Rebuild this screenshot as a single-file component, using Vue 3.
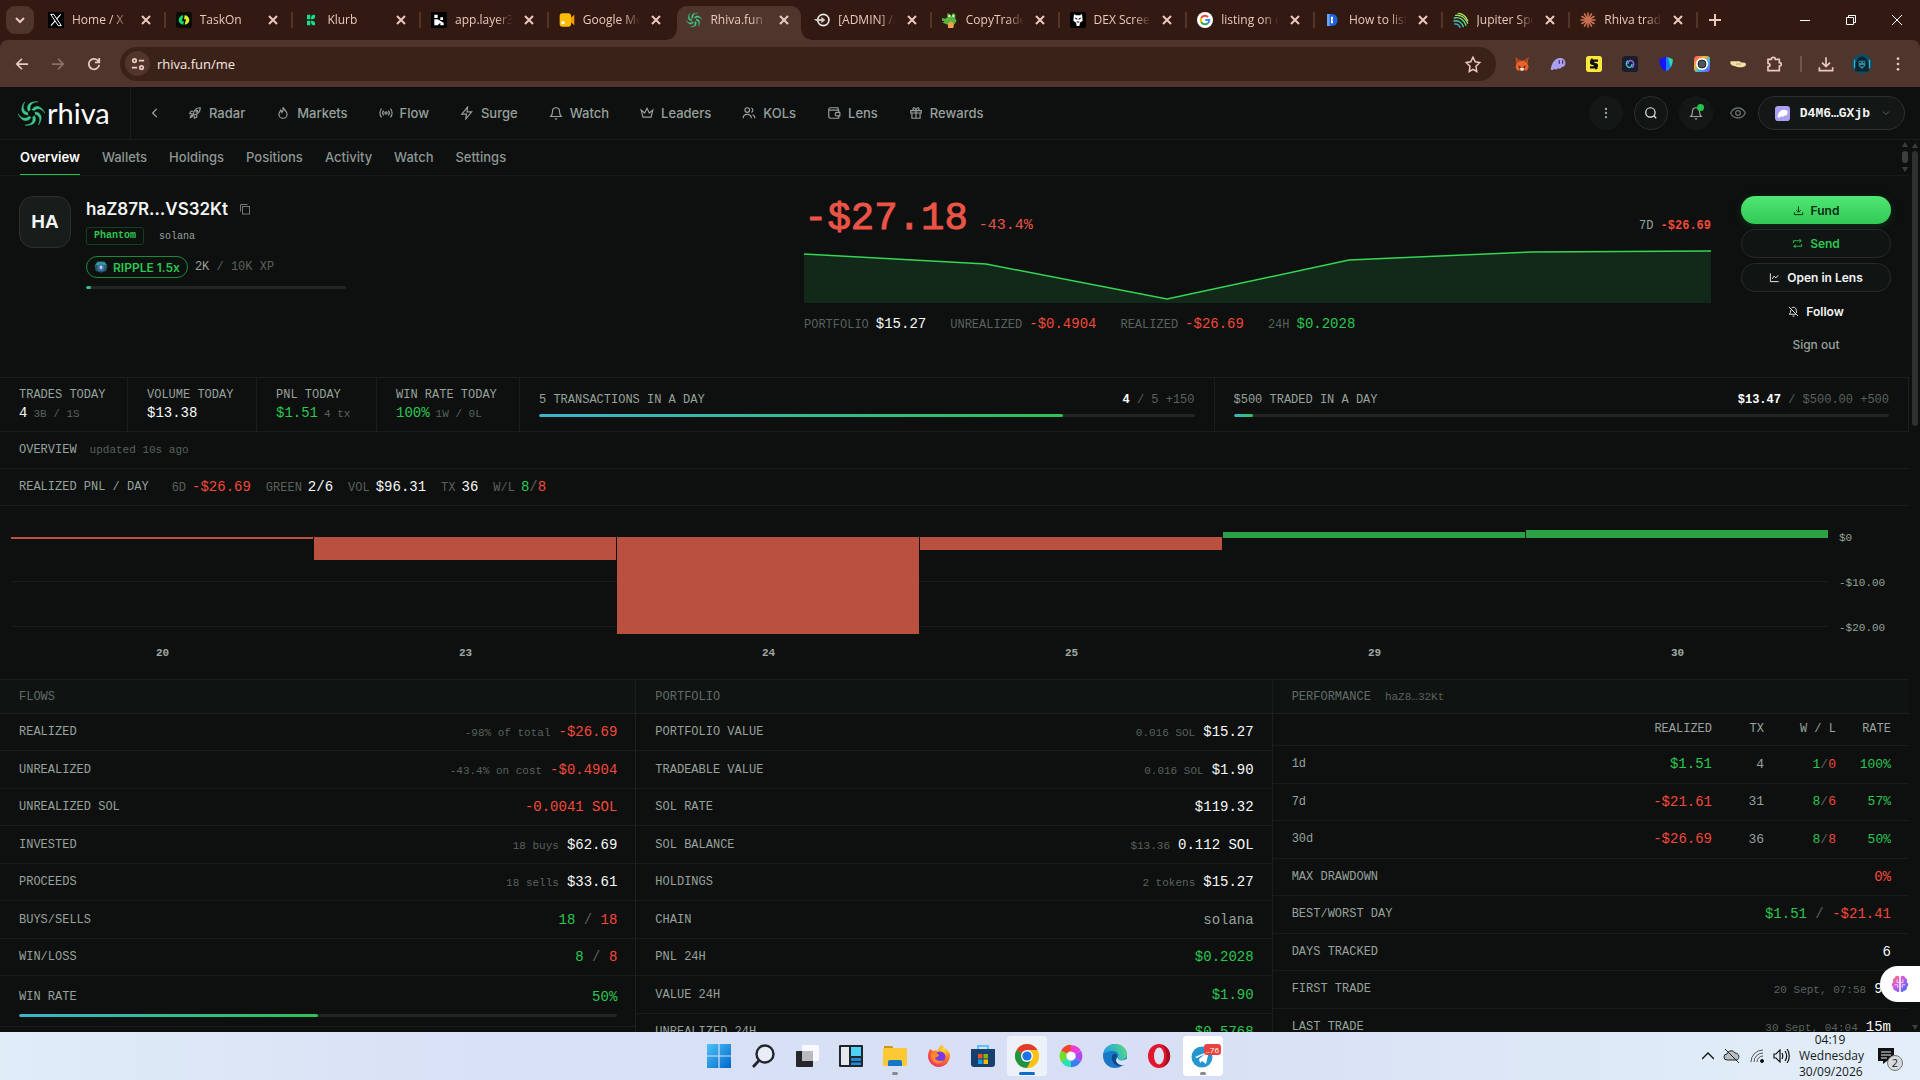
<script setup>
const swirl = (id) => {
  const blades = [0, 60, 120, 180, 240, 300]
    .map((a) => `<path transform="rotate(${a} 12 12)" d="M9.400 10.200C6.600 5.600 9.800 .6 17.800 1.600C12.600 1.800 9.800 4.800 11 8.800"/>`)
    .join('')
  return `<defs><linearGradient id="${id}" gradientUnits="userSpaceOnUse" x1="6" y1="0" x2="14" y2="24"><stop offset="0" stop-color="#2fd158"/><stop offset=".55" stop-color="#3cc98a"/><stop offset="1" stop-color="#46b5d6"/></linearGradient></defs><g fill="#3cc98a" stroke="#3cc98a" stroke-width=".4">${blades}</g>`
}

const burst = Array.from({ length: 12 }, (_, i) => `<path transform="rotate(${i * 30} 12 12)" d="M12 10V1.5" stroke="#d97757" stroke-width="2.2" stroke-linecap="round"/>`).join('')

const art = {
  x: '<rect width="24" height="24" fill="#000"/><path d="M4 3.500h4.600L20 20.500h-4.600Z" fill="none" stroke="#fff" stroke-width="1.500"/><path d="M19 3.500 12.800 10.700M10.700 13.200 4.400 20.500" stroke="#fff" stroke-width="1.600"/>',
  taskon: '<rect width="24" height="24" rx="3" fill="#0a0c06"/><path d="M11 5a7 7 0 0 0 0 14l1-5h-3Z" fill="#12d96c"/><path d="M13 5a7 7 0 0 1 0 14l2-8h-3Z" fill="#d8f222"/>',
  klurb: '<path d="M6 4h5v7H6zM6 13h5v7H6z" fill="#12e08a"/><path d="M12 11c0-5 1-7 6-7v3c0 3-2 4-6 4ZM12 13c0 5 1 7 6 7v-3c0-3-2-4-6-4Z" fill="#12e08a"/>',
  layer: '<rect width="24" height="24" rx="2" fill="#000"/><path d="M5 4h5v5H5zM5 11h5l9 5v4H14v-4l-4 4H5zM14 8h4v4h-4z" fill="#fff"/>',
  meet: '<path d="M17 9l6-5v16l-6-5Z" fill="#f29900"/><rect x="1" y="2" width="17" height="20" rx="4" fill="#fbbc04"/><circle cx="6" cy="16" r="2.500" fill="#fff"/>',
  rhiva: swirl('fav'),
  admin: '<circle cx="14" cy="12" r="8.500" fill="none" stroke="#f0e9e6" stroke-width="2.400"/><path d="M0 10.500h11V7l6 5-6 5v-3.500H3z" fill="#cfc9c6"/>',
  croc: '<path d="M0 9l5 1 3-2V2l4 1 2 3 2-4 4 1v7l2 3-3 5-4 1v4H9v-4l-8-3 3-2-4-1Z" fill="#58b53c"/><path d="M9 17l5-3 4 4-1 6H9Z" fill="#f0a04b"/><circle cx="11" cy="6" r="1.600" fill="#fff"/><circle cx="17" cy="6" r="1.600" fill="#fff"/>',
  dex: '<rect width="24" height="24" rx="3" fill="#000"/><path d="M6 3l3 2h6l3-2 1 10-4 3-1 5h-4l-1-5-4-3Z" fill="#fff"/><path d="M8 9l3 2M16 9l-3 2M10 15h4" stroke="#000" stroke-width="1.600"/>',
  google: '<circle cx="12" cy="12" r="12" fill="#fff"/><g fill="none" stroke-width="3"><path d="M16.600 7.400A6.500 6.500 0 0 0 6.300 8.900" stroke="#ea4335"/><path d="M6.300 8.900a6.500 6.500 0 0 0 0 6.200" stroke="#fbbc05"/><path d="M6.300 15.100a6.500 6.500 0 0 0 10 1.800" stroke="#34a853"/><path d="M16.300 16.900A6.500 6.500 0 0 0 18.500 12H12.500" stroke="#4285f4"/></g>',
  howto: '<path d="M3 3h6v18H3z" fill="#6ba2f5"/><path d="M7 3h4a8 9 0 0 1 0 18H7z" fill="#1f63d8"/><path d="M9 7h3v4l-2 1 2 1v4h-3" fill="#fff"/>',
  jupiter: '<g fill="none" stroke-width="2" stroke-linecap="round"><path d="M8 2C14 2 20 7 22 13" stroke="#b6e84e"/><path d="M4 5C12 4 19 9 22 17" stroke="#8fe06a"/><path d="M2 9C10 7 17 12 19.500 20" stroke="#5fdc8c"/><path d="M1.500 13.500C8 12 13.500 16 15.500 22" stroke="#3ecfb0"/><path d="M2.500 18C6 17.500 9 19.500 10.500 23" stroke="#2cbcd2"/></g>',
  claude: burst,
  fox: '<path d="M2 2l8 5h4l8-5-2 9 2 6-3 5-5-1h-4l-5 1-3-5 2-6Z" fill="#e8622a"/><path d="M6 14l4 2-1 4M18 14l-4 2 1 4" fill="#3a2a22"/><path d="M9 18h6l-1 4h-4Z" fill="#e8e2de"/><path d="M2 2l8 5-5 3ZM22 2l-8 5 5 3Z" fill="#a8401c"/>',
  ghost: '<path d="M1 20C3 9 8 3 15 3c6 0 9 4 8 9-1 4-4 5-5 4-2 3-4 4-6 2-2 3-4 3-5 1-2 2-5 3-6 1Z" fill="#ab9ff2"/><path d="M14 7v4M19 7v4" stroke="#4a3b6e" stroke-width="2" stroke-linecap="round"/>',
  sbox: '<rect width="24" height="24" rx="4" fill="#fbe83a"/><path d="M18 7H10a2.500 2.500 0 0 0 0 5h4a2.500 2.500 0 0 1 0 5H6M8 4l8 16" fill="none" stroke="#111" stroke-width="3.200"/>',
  knot: '<rect width="24" height="24" rx="5" fill="#1c1d2b"/><path d="M15 17c3-1 4-8-1-10-3-1-5 2-5 5" fill="none" stroke="#8b6cf0" stroke-width="2.200"/><path d="M9 7c-3 2-4 8 1 10 3 1 5-2 5-5" fill="none" stroke="#3ac6d8" stroke-width="2.200"/>',
  shield: '<path d="M12 1L2 5c0 9 3 15 10 18Z" fill="#1414ff"/><path d="M12 1l10 4c0 9-3 15-10 18Z" fill="#1c7cff"/><path d="M15 2l7 3c0 5-1 9-3 12Z" fill="#27e0a0"/>',
  lens: '<defs><linearGradient id="rb" x1="0" y1="0" x2="1" y2="1"><stop offset="0" stop-color="#f0417a"/><stop offset=".35" stop-color="#f7b733"/><stop offset=".65" stop-color="#2fb6f5"/><stop offset="1" stop-color="#8b3cf0"/></linearGradient></defs><rect width="24" height="24" rx="5" fill="url(#rb)"/><circle cx="12" cy="12" r="9" fill="#fff"/><circle cx="12" cy="12" r="6" fill="#4d5560" stroke="#222" stroke-width="1.500"/>',
  mitten: '<path d="M1 8h13l4 2c6-1 7 3 5 5-4 3-12 2-16 0-4 0-8-3-6-7Z" fill="#f3e2a6"/><path d="M9 12h7" stroke="#8d7a45"/>',
  avatar: '<circle cx="12" cy="12" r="12" fill="#0d5066"/><path d="M4 21C3 10 7 3 12 3s9 7 8 18Z" fill="#0b2430"/><path d="M8 8h8v6l-4 4-4-4Z" fill="#2b8faa"/><path d="M9 10h2M13 10h2M10 14h4" stroke="#08131a" stroke-width="1.500"/><path d="M3 7v10M21 7v10" stroke="#31b2d0" stroke-width="1.500"/>',
  gem: '<path d="M6 3h12l5 7-2 9-9 3-9-3-2-9Z" fill="#1d5a60"/><path d="M6 3h12l4 6H2Z" fill="#2e9a92"/><circle cx="12" cy="13" r="6" fill="#4a6fb0"/><path d="M10 10h4v5h-4z" fill="#c6d8ec"/>',
  brain: '<defs><linearGradient id="br" x1="0" y1="0" x2="1" y2="1"><stop offset="0" stop-color="#ff7a5c"/><stop offset=".4" stop-color="#d45ae0"/><stop offset="1" stop-color="#2f6bff"/></linearGradient></defs><path d="M11 2C8-.5 5 2 5 4 2 5 2 8 3 9.500 0 11 1 15 3 16c-1 3 2 5 4 5 1 2.500 4 2 4 0ZM13 2c3-2.500 6 0 6 2 3 1 3 4 2 5.500 3 1.500 2 5.500 0 6.500 1 3-2 5-4 5-1 2.500-4 2-4 0Z" fill="url(#br)"/><path d="M8 6v4h3M5 13h4v4M16 6v4h-3M19 13h-4v4" fill="none" stroke="#fff"/>',
}

const line = {
  rocket: '<path d="M9 14c1-6 5-11 12-11 0 7-5 11-11 12ZM9 9H5l-2 4 5 1M15 14.500V19l-4 2-1-6M4 20c0-3 1-4 3-4s1 3-3 4Z"/><circle cx="15" cy="9" r="1.500"/>',
  flame: '<path d="M12 2c1 4 7 7 7 12a7 7 0 0 1-14 0c0-3 2-4 3-7 1 1 2 2 2 4 2-2 3-5 2-9Z"/>',
  flow: '<circle cx="12" cy="12" r="2"/><path d="M8 8a6 6 0 0 0 0 8M16 8a6 6 0 0 1 0 8M4.500 4.500a11 11 0 0 0 0 15M19.500 4.500a11 11 0 0 1 0 15"/>',
  bolt: '<path d="M13 2L3 14h8l-1 8 10-12h-8Z"/>',
  bell: '<path d="M6 9a6 6 0 0 1 12 0c0 6 2 8 3 9H3c1-1 3-3 3-9ZM10 22h4"/>',
  crown: '<path d="M5 19h14l3-12-6 5-4-8-4 8-6-5Z"/>',
  users: '<circle cx="9" cy="7" r="4"/><path d="M2 21c0-9 14-9 14 0M16 3.500a4 4 0 0 1 0 7.500M18 15c3 1 4 3 4 6"/>',
  wallet: '<path d="M19 7V3H6a3 3 0 0 0-3 3v12a3 3 0 0 0 3 3h14v-4M3 7h17v4M22 11h-5a3 3 0 0 0 0 6h5Z"/>',
  gift: '<path d="M3 8h18v4H3zM5 12v9h14v-9M12 8v13M12 8C8 8 6 6 7 4s5-1 5 4c0-5 4-6 5-4s-1 4-5 4"/>',
  left: '<path d="M15 5l-7 7 7 7"/>',
  dots: '<circle cx="12" cy="5" r="1"/><circle cx="12" cy="12" r="1"/><circle cx="12" cy="19" r="1"/>',
  search: '<circle cx="11" cy="11" r="8"/><path d="M17 17l4 4"/>',
  eye: '<path d="M1 12c5-10 17-10 22 0-5 10-17 10-22 0Z"/><circle cx="12" cy="12" r="3.500"/>',
  down: '<path d="M6 9l6 6 6-6"/>',
  copy: '<rect x="7" y="7" width="14" height="15"/><path d="M3 17V3h14"/>',
  fund: '<path d="M12 3v12M7 11l5 5 5-5M3 16v5h18v-5"/>',
  send: '<path d="M3 11V6h17M16 2l4 4-4 4M21 13v5H4M8 14l-4 4 4 4"/>',
  chart: '<path d="M3 3v18h18M7 15l4-6 4 4 5-6"/>',
  belloff: '<path d="M8 4c5-3 10 0 10 5 0 3 1 5 1 6M17 18H3c2-2 3-5 3-9M10 22h4M2 2l20 20"/>',
}

const tabs = [
  ['x', 'Home / X'], ['taskon', 'TaskOn'], ['klurb', 'Klurb'], ['layer', 'app.layer3.xyz'], ['meet', 'Google Meet'],
  ['rhiva', 'Rhiva.fun Profile'], ['admin', '[ADMIN] // Panel'], ['croc', 'CopyTrader'], ['dex', 'DEX Screener'],
  ['google', 'listing on dex'], ['howto', 'How to list a'], ['jupiter', 'Jupiter Spot'], ['claude', 'Rhiva trading'],
]
const activeTab = 5
const extensions = ['fox', 'ghost', 'sbox', 'knot', 'shield', 'lens', 'mitten']

const nav = [
  ['rocket', 'Radar'], ['flame', 'Markets'], ['flow', 'Flow'], ['bolt', 'Surge'], ['bell', 'Watch'],
  ['crown', 'Leaders'], ['users', 'KOLs'], ['wallet', 'Lens'], ['gift', 'Rewards'],
]
const sections = ['Overview', 'Wallets', 'Holdings', 'Positions', 'Activity', 'Watch', 'Settings']

const heroStats = [
  ['PORTFOLIO', '$15.27', 'hi'], ['UNREALIZED', '-$0.4904', 'neg'], ['REALIZED', '-$26.69', 'neg'], ['24H', '$0.2028', 'pos'],
]
const today = [
  ['TRADES TODAY', '4', 'hi', '3B / 1S'], ['VOLUME TODAY', '$13.38', 'hi', ''],
  ['PNL TODAY', '$1.51', 'pos', '4 tx'], ['WIN RATE TODAY', '100%', 'pos', '1W / 0L'],
]
const goals = [
  { label: '5 TRANSACTIONS IN A DAY', now: '4', rest: ' / 5 +150', pct: 80 },
  { label: '$500 TRADED IN A DAY', now: '$13.47', rest: ' / $500.00 +500', pct: 3 },
]
const daySummary = [
  ['6D', [['-$26.69', 'neg']]], ['GREEN', [['2/6', 'hi']]], ['VOL', [['$96.31', 'hi']]], ['TX', [['36', 'hi']]],
  ['W/L', [['8', 'pos'], ['/', 'dim'], ['8', 'neg']]],
]
const days = [
  { day: '20', up: 0, down: 2 }, { day: '23', up: 0, down: 23 }, { day: '24', up: 0, down: 97 },
  { day: '25', up: 0, down: 13 }, { day: '29', up: 5, down: 1 }, { day: '30', up: 7, down: 1 },
]
const flows = [
  ['REALIZED', '-98% of total', [['-$26.69', 'neg']]],
  ['UNREALIZED', '-43.4% on cost', [['-$0.4904', 'neg']]],
  ['UNREALIZED SOL', '', [['-0.0041 SOL', 'neg']]],
  ['INVESTED', '18 buys', [['$62.69', 'hi']]],
  ['PROCEEDS', '18 sells', [['$33.61', 'hi']]],
  ['BUYS/SELLS', '', [['18', 'pos'], [' / ', 'dim'], ['18', 'neg']]],
  ['WIN/LOSS', '', [['8', 'pos'], [' / ', 'dim'], ['8', 'neg']]],
]
const portfolio = [
  ['PORTFOLIO VALUE', '0.016 SOL', [['$15.27', 'hi']]],
  ['TRADEABLE VALUE', '0.016 SOL', [['$1.90', 'hi']]],
  ['SOL RATE', '', [['$119.32', 'hi']]],
  ['SOL BALANCE', '$13.36', [['0.112 SOL', 'hi']]],
  ['HOLDINGS', '2 tokens', [['$15.27', 'hi']]],
  ['CHAIN', '', [['solana', 'mid']]],
  ['PNL 24H', '', [['$0.2028', 'pos']]],
  ['VALUE 24H', '', [['$1.90', 'pos']]],
  ['UNREALIZED 24H', '', [['$0.5768', 'pos']]],
]
const periods = [
  ['1d', '$1.51', 'pos', '4', '1', '0', '100%'],
  ['7d', '-$21.61', 'neg', '31', '8', '6', '57%'],
  ['30d', '-$26.69', 'neg', '36', '8', '8', '50%'],
]
const performance = [
  ['MAX DRAWDOWN', '', [['0%', 'neg']]],
  ['BEST/WORST DAY', '', [['$1.51', 'pos'], [' / ', 'dim'], ['-$21.41', 'neg']]],
  ['DAYS TRACKED', '', [['6', 'hi']]],
  ['FIRST TRADE', '20 Sept, 07:58', [['9d', 'hi']]],
  ['LAST TRADE', '30 Sept, 04:04', [['15m', 'hi']]],
]

const apps = [
  { name: 'Start', svg: '<defs><linearGradient id="wn" x1="0" y1="0" x2="1" y2="1"><stop offset="0" stop-color="#4cc2f8"/><stop offset="1" stop-color="#0067c8"/></linearGradient></defs><path d="M0 0h11.400v11.400H0zM12.600 0H24v11.400H12.600zM0 12.600h11.400V24H0zM12.600 12.600H24V24H12.600z" fill="url(#wn)"/>' },
  { name: 'Search', svg: '<circle cx="14" cy="10" r="8.500" fill="#e8edf8" stroke="#22262c" stroke-width="2.400"/><path d="M8 16.500L2 23" stroke="#22262c" stroke-width="2.800"/>' },
  { name: 'Task view', svg: '<rect x="1" y="7" width="17" height="16" rx="1" fill="#24262a"/><rect x="7" y="1" width="17" height="16" rx="1" fill="#fff" opacity=".8"/><rect x="7" y="7" width="11" height="10" fill="#b9bbc0"/>' },
  { name: 'Widgets', svg: '<rect width="24" height="22" y="1" rx="1" fill="#20262e"/><rect x="2" y="3" width="8" height="18" fill="#e6e8ec"/><rect x="12" y="3" width="10" height="9" fill="#4fd2fa"/><path d="M12 14h10v3H12zM12 18.500h10V21H12z" fill="#1d8ad8"/>' },
  { name: 'File Explorer', dot: true, svg: '<path d="M1 2h8l2 3v4H1z" fill="#d29212"/><rect y="4" width="24" height="18" rx="1.500" fill="#fcc934"/><path d="M5 22v-4a2 2 0 0 1 2-2h10a2 2 0 0 1 2 2v4Z" fill="#1477c9"/>' },
  { name: 'Firefox', svg: '<defs><radialGradient id="ff" cx=".7" cy=".2" r=".9"><stop offset="0" stop-color="#ffde3a"/><stop offset=".5" stop-color="#ff7a26"/><stop offset="1" stop-color="#e92a6a"/></radialGradient></defs><path d="M3 5l3 2c2-1 4-1 5 0C11 4 13 2 15 1c1 3 7 4 8 10 0 7-5 12-11 12S1 18 1 12c0-3 1-5 2-7Z" fill="url(#ff)"/><circle cx="13" cy="13" r="5.500" fill="#7a3be0"/><path d="M5 9c3-1 5 0 7 2-1 2-3 2-4 3 1 3 6 4 9 2-2 4-9 5-12 0-1-2-1-5 0-7Z" fill="#ff8a2a"/>' },
  { name: 'Microsoft Store', svg: '<path d="M7 6V2h10v4" fill="none" stroke="#58c6f4" stroke-width="2"/><path d="M0 5h24v15a3 3 0 0 1-3 3H3a3 3 0 0 1-3-3Z" fill="#17406f"/><path d="M7 10h4.500v4.500H7z" fill="#f25022"/><path d="M12.500 10H17v4.500h-4.500z" fill="#7fba00"/><path d="M7 15.500h4.500V20H7z" fill="#00a4ef"/><path d="M12.500 15.500H17V20h-4.500z" fill="#ffb900"/>' },
  { name: 'Chrome', active: true, svg: '<circle cx="12" cy="12" r="12" fill="#fbc116"/><path d="M12 12L1.600 6A12 12 0 0 1 22.400 6Z" fill="#e33b2e"/><path d="M1.600 6A12 12 0 0 0 12 24l5-9.500L12 12Z" fill="#229342"/><path d="M12 6h10.400a12 12 0 0 1-10.400 18l5.200-9Z" fill="#fbc116"/><circle cx="12" cy="12" r="6" fill="#fff"/><circle cx="12" cy="12" r="4.600" fill="#1a73e8"/>' },
  { name: 'Colour wheel', svg: '<g fill="none" stroke-width="6.500"><path d="M12 4.500A8 8 0 0 1 19 8" stroke="#f03ad0"/><path d="M19 8a8 8 0 0 1 0 8" stroke="#b04af0"/><path d="M19 16a8 8 0 0 1-7 4" stroke="#3a7df0"/><path d="M12 20a8 8 0 0 1-7-4" stroke="#2ce0b8"/><path d="M5 16a8 8 0 0 1 0-8" stroke="#6fe02a"/><path d="M5 8a8 8 0 0 1 7-4" stroke="#f0462a"/></g><circle cx="12" cy="12" r="4" fill="#fff"/>' },
  { name: 'Edge', svg: '<defs><linearGradient id="eg" x1="0" y1=".3" x2="1" y2="0"><stop offset="0" stop-color="#1f9ee8"/><stop offset="1" stop-color="#5be07a"/></linearGradient></defs><circle cx="12" cy="12" r="12" fill="#1a78c8"/><path d="M0 11C1 4 6 0 12 0c7 0 12 5 12 10 0 4-3 6-6 6s-4-1-3-3 0-6-5-6C5 7 1 9 0 11Z" fill="url(#eg)"/><path d="M10 10c-3 5 0 12 7 12 2 0 4-1 5-2-3 1-8 0-9-4-1-2 1-3 1-4s-2-3-4-2Z" fill="#0c4a8c"/><path d="M15 13c-1 3 3 4 6 3l3-1v3l-3 3c-4 1-8-2-8-5Z" fill="#dce2f5"/>' },
  { name: 'Opera', svg: '<ellipse cx="12" cy="12" rx="11" ry="12" fill="#e3152c"/><ellipse cx="12" cy="12" rx="5" ry="8.500" fill="#dce2f5"/><path d="M15 1c11 3 11 19 0 22 6-5 6-17 0-22Z" fill="#a80f1f"/>' },
  { name: 'Telegram', dot: true, badge: '..76', box: true, svg: '<circle cx="11" cy="13" r="10.500" fill="#2596cf"/><path d="M4 13l14-6-3 13-4-3-2 2-1-4 6-5-8 4Z" fill="#fff"/>' },
]
</script>

<template>
  <div class="screen">
    <header class="browser">
      <div class="tabstrip">
        <button class="tab-search" aria-label="Search tabs">
          <svg width="12" height="12" viewBox="0 0 24 24" fill="none" stroke="currentColor" stroke-width="4"><path d="M4 8l8 8 8-8" /></svg>
        </button>
        <div class="tabs">
          <div v-for="([icon, title], i) in tabs" :key="i" class="tab" :class="{ active: i === activeTab, before: i === activeTab - 1 }">
            <svg class="fav" viewBox="0 0 24 24" v-html="art[icon]"></svg>
            <span class="tab-title">{{ title }}</span>
            <button class="tab-close" :aria-label="'Close ' + title">
              <svg width="10" height="10" viewBox="0 0 10 10" stroke="currentColor" stroke-width="2"><path d="M1 1l8 8M9 1L1 9" /></svg>
            </button>
          </div>
        </div>
        <button class="new-tab" aria-label="New tab"><svg width="12" height="12" viewBox="0 0 12 12" stroke="currentColor" stroke-width="2"><path d="M6 0v12M0 6h12" /></svg></button>
        <div class="window-buttons">
          <button aria-label="Minimise"><svg width="12" height="12" viewBox="0 0 12 12" stroke="#fff"><path d="M1 6.500h10" /></svg></button>
          <button aria-label="Restore"><svg width="12" height="12" viewBox="0 0 12 12" fill="none" stroke="#fff"><path d="M1.500 3.500h7v7h-7zM3.500 3V1.500h7v7H9" /></svg></button>
          <button aria-label="Close window"><svg width="12" height="12" viewBox="0 0 12 12" stroke="#fff"><path d="M1 1l10 10M11 1L1 11" /></svg></button>
        </div>
      </div>
      <div class="toolbar">
        <button class="tool" aria-label="Back"><svg viewBox="0 0 16 16" fill="none" stroke="currentColor" stroke-width="2"><path d="M15 8H2M8 2L2 8l6 6" /></svg></button>
        <button class="tool faded" aria-label="Forward"><svg viewBox="0 0 16 16" fill="none" stroke="currentColor" stroke-width="2"><path d="M1 8h13M8 2l6 6-6 6" /></svg></button>
        <button class="tool" aria-label="Reload"><svg viewBox="0 0 16 16" fill="none" stroke="currentColor" stroke-width="2"><path d="M14 9a6 6 0 1 1-2-5.500L14 6M14 1v5H9" /></svg></button>
        <div class="omnibox">
          <button class="site-info" aria-label="Site information"><svg viewBox="0 0 16 16" width="14" height="14" fill="none" stroke="currentColor" stroke-width="2"><circle cx="4" cy="4" r="2" /><path d="M9 4h6M1 12h6" /><circle cx="12" cy="12" r="2" /></svg></button>
          <input type="text" value="rhiva.fun/me" aria-label="Address" />
          <button class="star" aria-label="Bookmark"><svg viewBox="0 0 24 24" width="18" height="18" fill="none" stroke="currentColor" stroke-width="2"><path d="M12 3l3 6 6 1-5 5 1 7-5-3-5 3 1-7-5-5 6-1Z" /></svg></button>
        </div>
        <div class="exts">
          <button v-for="e in extensions" :key="e" :aria-label="'Extension ' + e"><svg viewBox="0 0 24 24" v-html="art[e]"></svg></button>
          <button aria-label="Extensions"><svg viewBox="0 0 24 24" fill="none" stroke="currentColor" stroke-width="2.500"><path d="M3 5h5c0-4 6-4 6 0h6v5c4 0 4 5 0 5v7H3v-6c4 0 4-5 0-5Z" /></svg></button>
        </div>
        <span class="tool-sep"></span>
        <div class="exts end">
          <button aria-label="Downloads"><svg viewBox="0 0 24 24" fill="none" stroke="currentColor" stroke-width="2.500"><path d="M12 2v13M6 10l6 6 6-6M2 17v5h20v-5" /></svg></button>
          <button aria-label="Profile" class="big"><svg viewBox="0 0 24 24" v-html="art.avatar"></svg></button>
          <button aria-label="Menu"><svg viewBox="0 0 24 24" fill="currentColor"><circle cx="12" cy="4" r="2" /><circle cx="12" cy="12" r="2" /><circle cx="12" cy="20" r="2" /></svg></button>
        </div>
      </div>
    </header>

    <div class="site">
      <header class="site-head">
        <a class="brand" href="#">
          <svg width="27" height="27" viewBox="0 0 24 24" v-html="swirl('brand')"></svg>
          <span>rhiva</span>
        </a>
        <button class="collapse" aria-label="Scroll left"><svg class="ln" viewBox="0 0 24 24" v-html="line.left"></svg></button>
        <nav class="main-nav">
          <a v-for="[icon, name] in nav" :key="name" href="#"><svg class="ln" viewBox="0 0 24 24" v-html="line[icon]"></svg>{{ name }}</a>
        </nav>
        <div class="head-tools">
          <button class="round" aria-label="More"><svg class="ln" viewBox="0 0 24 24" v-html="line.dots"></svg></button>
          <button class="round ring" aria-label="Search"><svg class="ln" viewBox="0 0 24 24" v-html="line.search"></svg></button>
          <button class="round bell" aria-label="Notifications"><svg class="ln" viewBox="0 0 24 24" v-html="line.bell"></svg><i></i></button>
          <button class="eye" aria-label="Hide values"><svg class="ln" viewBox="0 0 24 24" v-html="line.eye"></svg></button>
          <button class="account">
            <svg width="15" height="15" viewBox="0 0 24 24"><rect width="24" height="24" rx="5" fill="#ab9ff2" /><path d="M4 17C5 10 9 6 14 6c5 0 7 3 6 6-1 4-4 4-5 3-2 3-4 2-5 1-2 3-5 3-6 1Z" fill="#fff" /></svg>
            <span>D4M6…GXjb</span>
            <svg class="ln" viewBox="0 0 24 24" v-html="line.down"></svg>
          </button>
        </div>
      </header>

      <div class="body">
        <main>
          <div class="subnav">
            <nav><a v-for="(s, i) in sections" :key="s" href="#" :class="{ on: i === 0 }">{{ s }}</a></nav>
            <div class="mini-scroll" aria-hidden="true"><i class="up"></i><b></b><i class="dn"></i></div>
          </div>

          <section class="hero">
            <div class="who">
              <div class="badge">HA</div>
              <div class="id">
                <div class="name"><h1>haZ87R…VS32Kt</h1><button aria-label="Copy address"><svg class="ln" viewBox="0 0 24 24" v-html="line.copy"></svg></button></div>
                <div class="tags"><span class="tag">Phantom</span><span>solana</span></div>
                <div class="level">
                  <span class="ripple"><svg width="14" height="14" viewBox="0 0 24 24" v-html="art.gem"></svg>RIPPLE 1.5x</span>
                  <span class="xp"><em class="mid">2K</em> / 10K XP</span>
                </div>
                <div class="bar"><i style="width: 2%"></i></div>
              </div>
            </div>

            <div class="equity">
              <div class="headline">
                <strong>-$27.18</strong><span class="pct">-43.4%</span>
                <span class="week">7D <b>-$26.69</b></span>
              </div>
              <svg class="area" viewBox="0 0 907 53" preserveAspectRatio="none">
                <path d="M0 4L182 14L363 49L545 10L727 2L907 1V53H0Z" fill="#122819" />
                <path d="M0 4L182 14L363 49L545 10L727 2L907 1" fill="none" stroke="#35d655" stroke-width="1.500" vector-effect="non-scaling-stroke" />
              </svg>
              <div class="stats">
                <span v-for="[k, v, c] in heroStats" :key="k" class="stat"><em>{{ k }}</em><b :class="c">{{ v }}</b></span>
              </div>
            </div>

            <div class="actions">
              <button class="primary"><svg class="ln" viewBox="0 0 24 24" v-html="line.fund"></svg>Fund</button>
              <button class="outline pos"><svg class="ln" viewBox="0 0 24 24" v-html="line.send"></svg>Send</button>
              <button class="outline"><svg class="ln" viewBox="0 0 24 24" v-html="line.chart"></svg>Open in Lens</button>
              <button><svg class="ln" viewBox="0 0 24 24" v-html="line.belloff"></svg>Follow</button>
              <button class="quiet">Sign out</button>
            </div>
          </section>

          <section class="today">
            <div v-for="[k, v, c, s] in today" :key="k" class="cell"><em>{{ k }}</em><p><b :class="c">{{ v }}</b><small>{{ s }}</small></p></div>
            <div v-for="g in goals" :key="g.label" class="cell goal">
              <p><em>{{ g.label }}</em><span><b>{{ g.now }}</b>{{ g.rest }}</span></p>
              <div class="bar"><i :style="{ width: g.pct + '%' }"></i></div>
            </div>
          </section>

          <div class="line-row over"><h2>OVERVIEW</h2><small>updated 10s ago</small></div>
          <div class="line-row daily">
            <h2>REALIZED PNL / DAY</h2>
            <span v-for="[k, parts] in daySummary" :key="k" class="stat"><em>{{ k }}</em><span><b v-for="([t, c], i) in parts" :key="i" :class="c">{{ t }}</b></span></span>
          </div>

          <section class="pnl">
            <div class="plot">
              <div class="grid-lines"><i></i><i></i></div>
              <div v-for="d in days" :key="d.day" class="day">
                <div class="col"><i class="gain" :style="{ height: d.up + 'px' }"></i><i :class="d.up ? 'gain' : 'loss'" :style="{ height: d.down + 'px' }"></i></div>
                <span>{{ d.day }}</span>
              </div>
            </div>
            <div class="scale"><span>$0</span><span>-$10.00</span><span>-$20.00</span></div>
          </section>

          <section class="panels">
            <div class="panel">
              <h3>FLOWS</h3>
              <div v-for="[k, hint, parts] in flows" :key="k" class="row"><em>{{ k }}</em><p><small>{{ hint }}</small><span><b v-for="([t, c], i) in parts" :key="i" :class="c">{{ t }}</b></span></p></div>
              <div class="rate">
                <p><em>WIN RATE</em><b class="pos">50%</b></p>
                <div class="bar"><i style="width: 50%"></i></div>
              </div>
            </div>
            <div class="panel">
              <h3>PORTFOLIO</h3>
              <div v-for="[k, hint, parts] in portfolio" :key="k" class="row"><em>{{ k }}</em><p><small>{{ hint }}</small><span><b v-for="([t, c], i) in parts" :key="i" :class="c">{{ t }}</b></span></p></div>
            </div>
            <div class="panel">
              <h3>PERFORMANCE<small>haZ8…32Kt</small></h3>
              <table>
                <thead><tr><th></th><th>REALIZED</th><th class="tx">TX</th><th class="wl">W / L</th><th class="rt">RATE</th></tr></thead>
                <tbody>
                  <tr v-for="[p, r, c, tx, w, l, rate] in periods" :key="p">
                    <td>{{ p }}</td><td class="amount" :class="c">{{ r }}</td><td>{{ tx }}</td>
                    <td><span class="pos">{{ w }}</span><span class="dim">/</span><span class="neg">{{ l }}</span></td><td class="pos">{{ rate }}</td>
                  </tr>
                </tbody>
              </table>
              <div v-for="[k, hint, parts] in performance" :key="k" class="row"><em>{{ k }}</em><p><small>{{ hint }}</small><span><b v-for="([t, c], i) in parts" :key="i" :class="c">{{ t }}</b></span></p></div>
            </div>
          </section>
        </main>
        <div class="scrollbar" aria-hidden="true"><i class="up"></i><b></b><i class="dn"></i></div>
      </div>
      <button class="assistant" aria-label="Assistant"><svg width="18" height="18" viewBox="0 0 24 24" v-html="art.brain"></svg></button>
    </div>

    <footer class="taskbar">
      <div class="apps">
        <button v-for="a in apps" :key="a.name" :aria-label="a.name" :class="{ active: a.active, box: a.box, dot: a.dot }">
          <svg width="24" height="24" viewBox="0 0 24 24" v-html="a.svg"></svg>
          <span v-if="a.badge" class="count">{{ a.badge }}</span>
        </button>
      </div>
      <div class="tray">
        <svg width="12" height="12" viewBox="0 0 12 12" fill="none" stroke="#111" stroke-width="1.400"><path d="M0 9l6-6 6 6" /></svg>
        <svg width="18" height="16" viewBox="0 0 18 16" fill="#b9bec6" stroke="#222"><path d="M4 12a3 3 0 0 1 0-6c1-4 7-4 8-1 5 0 5 7 1 7Z" /><path d="M2 1l14 14" /></svg>
        <svg width="14" height="14" viewBox="0 0 14 14" fill="none" stroke="#555"><path d="M1 13A12 12 0 0 1 13 1M4 13a9 9 0 0 1 9-9M7 13a6 6 0 0 1 6-6" /><circle cx="12" cy="12" r="1.500" fill="#111" stroke="#111" /></svg>
        <svg width="17" height="14" viewBox="0 0 17 14" fill="none" stroke="#111" stroke-width="1.200"><path d="M1 5h2l4-4v12L3 9H1ZM9 4c1 2 1 4 0 6M12 2c2 3 2 7 0 10M14 0c3 4 3 10 0 14" /></svg>
        <div class="clock"><span>04:19</span><span>Wednesday</span><span>30/09/2026</span></div>
        <button class="notif" aria-label="Notifications"><svg width="16" height="16" viewBox="0 0 16 16"><path d="M0 0h16v13h-7l-4 3v-3H0Z" fill="#111" /><path d="M3 4h10M3 7h10M3 10h6" stroke="#e3ecf8" /></svg><span>2</span></button>
      </div>
    </footer>
  </div>
</template>

<style>
html,
body {
  margin: 0;
  background: #0d100f;
}
</style>

<style scoped>
* {
  box-sizing: border-box;
}
.screen {
  display: flex;
  flex-direction: column;
  height: 100vh;
  overflow: hidden;
  color: #f2f5f3;
  font-family: Inter, "Liberation Sans", sans-serif;
  font-size: 13px;
}
button {
  padding: 0;
  border: 0;
  background: none;
  color: inherit;
  font: inherit;
}
a {
  color: inherit;
  text-decoration: none;
}
svg {
  display: block;
  flex: none;
}
h1, h2, h3, p {
  margin: 0;
  font-weight: 400;
}
em {
  font-style: normal;
}
.pos { color: #2bc650; }
.neg { color: #f4493a; }
.hi { color: #f7f9f8; }
.mid { color: #98a19c; }
.dim { color: #59615d; }
.ln {
  width: 14px;
  height: 14px;
  fill: none;
  stroke: currentColor;
  stroke-width: 2;
}

/* browser chrome */
.browser {
  flex: none;
  background: #321a13;
  color: #ecc8bd;
  font-family: "Open Sans", "Noto Sans", sans-serif;
}
.tabstrip {
  display: flex;
  align-items: center;
  height: 40px;
}
.tab-search {
  display: grid;
  flex: none;
  place-items: center;
  width: 28px;
  height: 28px;
  margin: 0 4px 0 6px;
  border-radius: 9px;
  background: #50352c;
}
.tabs {
  display: flex;
  align-self: flex-end;
  flex: 0 1 1660px;
  min-width: 0;
  height: 34px;
}
.tab {
  position: relative;
  display: flex;
  flex: 1 1 0;
  align-items: center;
  min-width: 0;
  padding: 0 14px 6px 10px;
}
.tab::after {
  content: "";
  position: absolute;
  top: 6px;
  right: 0;
  width: 2px;
  height: 16px;
  background: #50352c;
}
.tab.active::before {
  content: "";
  position: absolute;
  inset: 0 3px 0 1px;
  border-radius: 10px 10px 0 0;
  background: #50352c;
}
.tab.before::after {
  display: none;
}
.tab.active::after {
  top: auto;
  right: -7px;
  bottom: 0;
  left: -9px;
  width: auto;
  height: 10px;
  background:
    radial-gradient(circle at 0 0, transparent 9px, #50352c 10px) left / 10px 10px no-repeat,
    radial-gradient(circle at 100% 0, transparent 9px, #50352c 10px) right / 10px 10px no-repeat;
}
.tab > * {
  position: relative;
}
.fav {
  width: 16px;
  height: 16px;
}
.tab-title {
  flex: 1;
  min-width: 0;
  margin: 0 9px 0 8px;
  overflow: hidden;
  font-size: 12px;
  line-height: 18px;
  white-space: nowrap;
  mask-image: linear-gradient(90deg, #000 70%, transparent 98%);
}
.tab-close {
  display: grid;
  flex: none;
  place-items: center;
  width: 12px;
  height: 16px;
}
.new-tab {
  display: grid;
  flex: none;
  place-items: center;
  width: 34px;
  height: 28px;
}
.window-buttons {
  display: flex;
  flex: none;
  margin-left: auto;
}
.window-buttons button {
  display: grid;
  place-items: center;
  width: 46px;
  height: 40px;
}
.toolbar {
  display: flex;
  align-items: center;
  height: 47px;
  border-radius: 8px 8px 0 0;
  background: #50352c;
}
.tool {
  display: grid;
  place-items: center;
  width: 36px;
  height: 34px;
}
.tool:first-child {
  margin-left: 4px;
}
.tool svg {
  width: 14px;
  height: 14px;
}
.faded {
  opacity: 0.4;
}
.omnibox {
  display: flex;
  flex: 1;
  align-items: center;
  height: 34px;
  margin-left: 8px;
  padding: 0 14px 0 5px;
  border-radius: 17px;
  background: #3a2218;
}
.site-info {
  display: grid;
  place-items: center;
  width: 25px;
  height: 25px;
  border-radius: 50%;
  background: #50352c;
}
.omnibox input {
  flex: 1;
  min-width: 0;
  padding: 0 7px;
  border: 0;
  outline: 0;
  background: none;
  color: #fbe9e3;
  font: 13px "Open Sans", sans-serif;
}
.exts {
  display: flex;
  margin-left: 8px;
}
.exts button {
  display: grid;
  place-items: center;
  width: 36px;
  height: 34px;
}
.exts svg {
  width: 16px;
  height: 16px;
}
.exts .big svg {
  width: 20px;
  height: 20px;
}
.tool-sep {
  width: 2px;
  height: 16px;
  margin-left: 8px;
  background: #71544a;
}
.exts.end {
  margin: 0 4px 0 6px;
}

/* site header */
.site {
  position: relative;
  display: flex;
  flex: 1;
  flex-direction: column;
  min-height: 0;
  background: #0d100f;
}
.site-head {
  display: flex;
  flex: none;
  align-items: center;
  height: 53px;
  border-bottom: 1px solid #1a1f1d;
}
.brand {
  display: flex;
  align-items: center;
  align-self: stretch;
  gap: 2px;
  width: 131px;
  padding-left: 18px;
  border-right: 1px solid #1a1f1d;
}
.brand span {
  color: #fff;
  font-family: Lato, sans-serif;
  font-size: 29px;
  line-height: 28px;
}
.collapse {
  display: grid;
  place-items: center;
  width: 48px;
  height: 34px;
  color: #a3aca7;
}
.main-nav {
  display: flex;
  gap: 31px;
  margin-left: 9px;
  color: #97a09b;
  font-weight: 500;
}
.main-nav a {
  display: flex;
  align-items: center;
  gap: 7px;
}
.head-tools {
  display: flex;
  align-items: center;
  gap: 11px;
  margin-left: auto;
  padding-right: 15px;
  color: #98a19c;
}
.round {
  position: relative;
  display: grid;
  place-items: center;
  width: 34px;
  height: 34px;
  border: 1px solid #141917;
  border-radius: 50%;
  background: #131816;
}
.ring {
  border-color: #2a302d;
  background: #111513;
  color: #f2f5f3;
}
.bell i {
  position: absolute;
  top: 7px;
  right: 8px;
  width: 7px;
  height: 7px;
  border-radius: 50%;
  background: #22c54c;
}
.eye {
  display: grid;
  place-items: center;
  width: 28px;
  height: 34px;
  margin-right: -5px;
  color: #656e69;
}
.eye .ln {
  width: 16px;
  height: 16px;
}
.account {
  display: flex;
  align-items: center;
  gap: 10px;
  height: 34px;
  padding: 0 12px 0 16px;
  border: 1px solid #2a302d;
  border-radius: 17px;
  background: #131716;
  color: #f2f5f3;
  font-family: "Liberation Mono", monospace;
  font-weight: 700;
}
.account .ln {
  width: 12px;
  height: 12px;
  color: #59615d;
}

/* scroll area */
.body {
  display: flex;
  flex: 1;
  min-height: 0;
  overflow: hidden;
}
main {
  flex: 1;
  min-width: 0;
  font-family: "Liberation Mono", monospace;
}
.scrollbar {
  display: flex;
  flex-direction: column;
  align-items: center;
  width: 11px;
  padding: 3px 0 2px;
}
.scrollbar b {
  width: 6px;
  height: 31%;
  margin: 3px 0 auto;
  border-radius: 3px;
  background: #2c312f;
}
.up, .dn {
  width: 0;
  height: 0;
  border: 3px solid transparent;
}
.up {
  border-bottom: 5px solid #3a3f3d;
  border-top: 0;
}
.dn {
  border-top: 5px solid #3a3f3d;
  border-bottom: 0;
}
.subnav {
  display: flex;
  justify-content: space-between;
  height: 36px;
  padding-left: 20px;
  border-bottom: 1px solid #151918;
  font-family: Inter, sans-serif;
}
.subnav nav {
  display: flex;
  gap: 22px;
  color: #8e9792;
  font-weight: 500;
}
.subnav a {
  height: 35px;
  line-height: 34px;
}
.subnav .on {
  border-bottom: 1px solid #27c24c;
  color: #fff;
  font-weight: 600;
}
.mini-scroll {
  display: flex;
  flex-direction: column;
  align-items: center;
  gap: 4px;
  width: 8px;
  padding-top: 2px;
}
.mini-scroll b {
  width: 6px;
  height: 12px;
  border-radius: 3px;
  background: #3a3f3d;
}

/* hero */
.hero {
  display: grid;
  grid-template-columns: minmax(0, 755fr) minmax(0, 907fr) 150px;
  gap: 30px;
  padding: 20px 18px 19px 19px;
}
.who {
  display: flex;
  gap: 15px;
}
.badge {
  display: grid;
  flex: none;
  place-items: center;
  width: 52px;
  height: 52px;
  border: 1px solid #2b312e;
  border-radius: 14px;
  background: #181d1b;
  font: 700 19px "Liberation Sans", sans-serif;
}
.name {
  display: flex;
  align-items: center;
  gap: 11px;
  height: 26px;
}
h1 {
  font: 600 17px/26px Inter, sans-serif;
}
.name button {
  color: #6e7772;
}
.name .ln {
  width: 12px;
  height: 12px;
}
.tags {
  display: flex;
  align-items: center;
  gap: 15px;
  height: 18px;
  margin-top: 5px;
  color: #98a19c;
  font-size: 10px;
}
.tag {
  padding: 0 7px;
  border: 1px solid #14401f;
  border-radius: 3px;
  color: #2bc650;
  font-weight: 700;
  line-height: 16px;
}
.level {
  display: flex;
  align-items: center;
  gap: 7px;
  margin-top: 11px;
}
.ripple {
  display: flex;
  align-items: center;
  gap: 5px;
  height: 22px;
  padding: 0 7px;
  border: 1px solid #1d8a3a;
  border-radius: 11px;
  color: #2bc650;
  font-family: Inter, sans-serif;
  font-size: 12px;
  font-weight: 600;
}
.xp {
  color: #59615d;
  font-size: 12px;
}
.bar {
  height: 3px;
  overflow: hidden;
  border-radius: 2px;
  background: #222624;
}
.bar i {
  display: block;
  height: 100%;
  border-radius: 2px;
  background: linear-gradient(90deg, #3db3cc, #2fc157);
}
.id .bar {
  width: 260px;
  margin-top: 8px;
}
.headline {
  display: flex;
  align-items: baseline;
  height: 54px;
  color: #ea5446;
}
.headline strong {
  font-size: 39px;
  font-weight: 400;
  line-height: 46px;
  -webkit-text-stroke: 1px currentColor;
}
.pct {
  margin-left: 11px;
  font-size: 15px;
}
.week {
  margin-left: auto;
  color: #98a19c;
  font-size: 12px;
}
.week b {
  color: #f4493a;
}
.area {
  width: 100%;
  height: 53px;
}
.stats {
  display: flex;
  gap: 24px;
  margin-top: 13px;
}
.stat {
  display: inline-flex;
  align-items: baseline;
  gap: 7px;
  white-space: nowrap;
}
.stat em {
  color: #59615d;
  font-size: 12px;
}
.stat b, .row b, .rate b, .today .cell > p > b {
  font-size: 14px;
  font-weight: 400;
  white-space: pre;
}
.actions {
  display: flex;
  flex-direction: column;
  gap: 5px;
  font-family: Inter, sans-serif;
}
.actions button {
  display: flex;
  align-items: center;
  justify-content: center;
  gap: 7px;
  height: 28px;
  border-radius: 14px;
  font-size: 12px;
  font-weight: 600;
}
.actions .ln {
  width: 11px;
  height: 11px;
}
.actions .primary {
  background: linear-gradient(#4fe673, #32c954);
  box-shadow: 0 2px 8px #1c6b3055;
  color: #0b2a13;
}
.actions .outline {
  height: 29px;
  border: 1px solid #252a28;
  background: #101413;
}
.actions .quiet {
  color: #98a19c;
  font-weight: 500;
}

/* daily strip */
.today {
  display: grid;
  grid-template-columns: 128px 129px 120px 143px minmax(0, 1fr) minmax(0, 1fr);
  height: 55px;
  border-top: 1px solid #1a1f1d;
  border-bottom: 1px solid #1a1f1d;
}
.cell {
  padding: 8px 0 0 19px;
  border-right: 1px solid #1a1f1d;
  white-space: nowrap;
}
.cell em {
  display: block;
  color: #98a19c;
  font-size: 12px;
  line-height: 18px;
}
.cell > p {
  display: flex;
  align-items: baseline;
  gap: 6px;
  line-height: 18px;
}
small {
  color: #59615d;
  font-size: 11px;
}
.goal {
  padding: 13px 19px 0;
}
.goal > p {
  justify-content: space-between;
  margin-bottom: 5px;
  color: #59615d;
  font-size: 12px;
}
.goal b {
  color: #fff;
}
.line-row {
  display: flex;
  align-items: center;
  height: 37px;
  padding-left: 19px;
  border-bottom: 1px solid #1a1f1d;
}
.line-row h2 {
  color: #98a19c;
  font-size: 12px;
}
.over {
  gap: 13px;
}
.daily {
  gap: 15px;
}
.daily h2 {
  margin-right: 8px;
}
.daily .stat {
  gap: 6px;
}

/* PnL chart */
.pnl {
  display: flex;
  height: 173px;
  padding: 31px 0 0 11px;
}
.plot {
  position: relative;
  display: flex;
  flex: 1;
}
.grid-lines {
  position: absolute;
  inset: 0;
}
.grid-lines i {
  display: block;
  height: 45px;
  border-bottom: 1px solid #171b19;
}
.day {
  position: relative;
  flex: 1;
  height: 130px;
}
.col {
  display: flex;
  flex-direction: column;
  height: 106px;
  margin-right: 1px;
}
.gain { background: #2ca044; }
.loss { background: #b95040; }
.col .gain:first-child {
  flex: none;
}
.day:nth-last-child(2) .col { margin-top: -5px; height: 111px; }
.day:last-child .col { margin-top: -7px; height: 113px; }
.day span {
  display: block;
  color: #a0a8a4;
  font-size: 11px;
  font-weight: 700;
  line-height: 20px;
  text-align: center;
}
.scale {
  display: flex;
  flex-direction: column;
  width: 80px;
  padding-left: 10px;
  margin-top: -21px;
  color: #98a19c;
  font-size: 11px;
  line-height: 45px;
}

/* panels */
.panels {
  display: grid;
  grid-template-columns: repeat(3, minmax(0, 1fr));
  border-top: 1px solid #1a1f1d;
}
.panel {
  border-right: 1px solid #1a1f1d;
}
.panel:last-child {
  border-right: 0;
}
h3 {
  display: flex;
  align-items: center;
  gap: 14px;
  height: 34px;
  padding-left: 19px;
  border-bottom: 1px solid #1c211f;
  background: #0f1413;
  color: #626b66;
  font-size: 12px;
}
.row {
  display: flex;
  align-items: center;
  justify-content: space-between;
  height: 38px;
  padding: 0 18px 0 19px;
  border-bottom: 1px solid #171b19;
}
.row:nth-child(even) {
  height: 37px;
}
.panel:last-child .row:nth-child(odd) {
  height: 37px;
}
.panel:last-child .row:nth-child(even) {
  height: 38px;
}
.row em, .rate em {
  color: #98a19c;
  font-size: 12px;
}
.row p {
  display: flex;
  align-items: baseline;
  gap: 8px;
}
.rate {
  padding: 12px 18px 9px 19px;
  border-bottom: 1px solid #1a1f1d;
}
.rate p {
  display: flex;
  align-items: center;
  justify-content: space-between;
  height: 18px;
  margin-bottom: 8px;
}
table {
  width: 100%;
  border-collapse: collapse;
}
th {
  height: 31px;
  padding: 0;
  border-bottom: 1px solid #171b19;
  color: #98a19c;
  font-size: 12px;
  font-weight: 400;
  text-align: right;
}
.tx { width: 52px; }
.wl { width: 72px; }
.rt { width: 73px; }
td {
  height: 38px;
  padding: 0;
  border-bottom: 1px solid #171b19;
  font-size: 13px;
  text-align: right;
}
td:not([class]) {
  color: #98a19c;
}
tr:nth-child(even) td {
  height: 37px;
}
td:first-child {
  padding-left: 19px;
  font-size: 12px;
  text-align: left;
}
td:last-child, th:last-child {
  padding-right: 18px;
}
.amount {
  font-size: 14px;
}
.assistant {
  position: absolute;
  right: 0;
  bottom: 30px;
  display: flex;
  align-items: center;
  width: 40px;
  height: 36px;
  padding-left: 11px;
  border-radius: 18px 0 0 18px;
  background: #fff;
}

/* taskbar */
.taskbar {
  position: relative;
  display: flex;
  flex: none;
  align-items: center;
  justify-content: center;
  height: 48px;
  padding-left: 2px;
  background: linear-gradient(90deg, #e0ecf8, #d8e1f6 25%, #d8dff5 60%, #dde8f7 80%, #e3eef9);
  color: #161a20;
  font-family: "Open Sans", sans-serif;
}
.apps {
  display: flex;
  gap: 4px;
}
.apps button {
  position: relative;
  display: grid;
  place-items: center;
  width: 40px;
  height: 40px;
  border-radius: 4px;
}
.apps .active {
  background: #edf1fa;
}
.apps .box {
  background: #fff;
}
.apps .dot::after, .apps .active::after {
  content: "";
  position: absolute;
  bottom: 1px;
  left: 17px;
  width: 6px;
  height: 3px;
  border-radius: 2px;
  background: #858990;
}
.apps .active::after {
  left: 12px;
  width: 16px;
  background: #0b6cd0;
}
.count {
  position: absolute;
  top: 8px;
  right: 2px;
  padding: 0 2px;
  border-radius: 3px;
  background: #e8433f;
  color: #fff;
  font-size: 8px;
  line-height: 11px;
}
.tray {
  position: absolute;
  right: 20px;
  display: flex;
  align-items: center;
  gap: 9px;
}
.clock {
  display: flex;
  flex-direction: column;
  width: 62px;
  font-size: 12px;
  line-height: 16px;
  text-align: center;
  white-space: nowrap;
}
.notif {
  position: relative;
  width: 22px;
  margin-left: 8px;
}
.notif span {
  position: absolute;
  top: 7px;
  right: -3px;
  width: 16px;
  height: 16px;
  border: 1px solid #777;
  border-radius: 50%;
  background: #d7dade;
  font-size: 11px;
  line-height: 14px;
  text-align: center;
}
</style>
